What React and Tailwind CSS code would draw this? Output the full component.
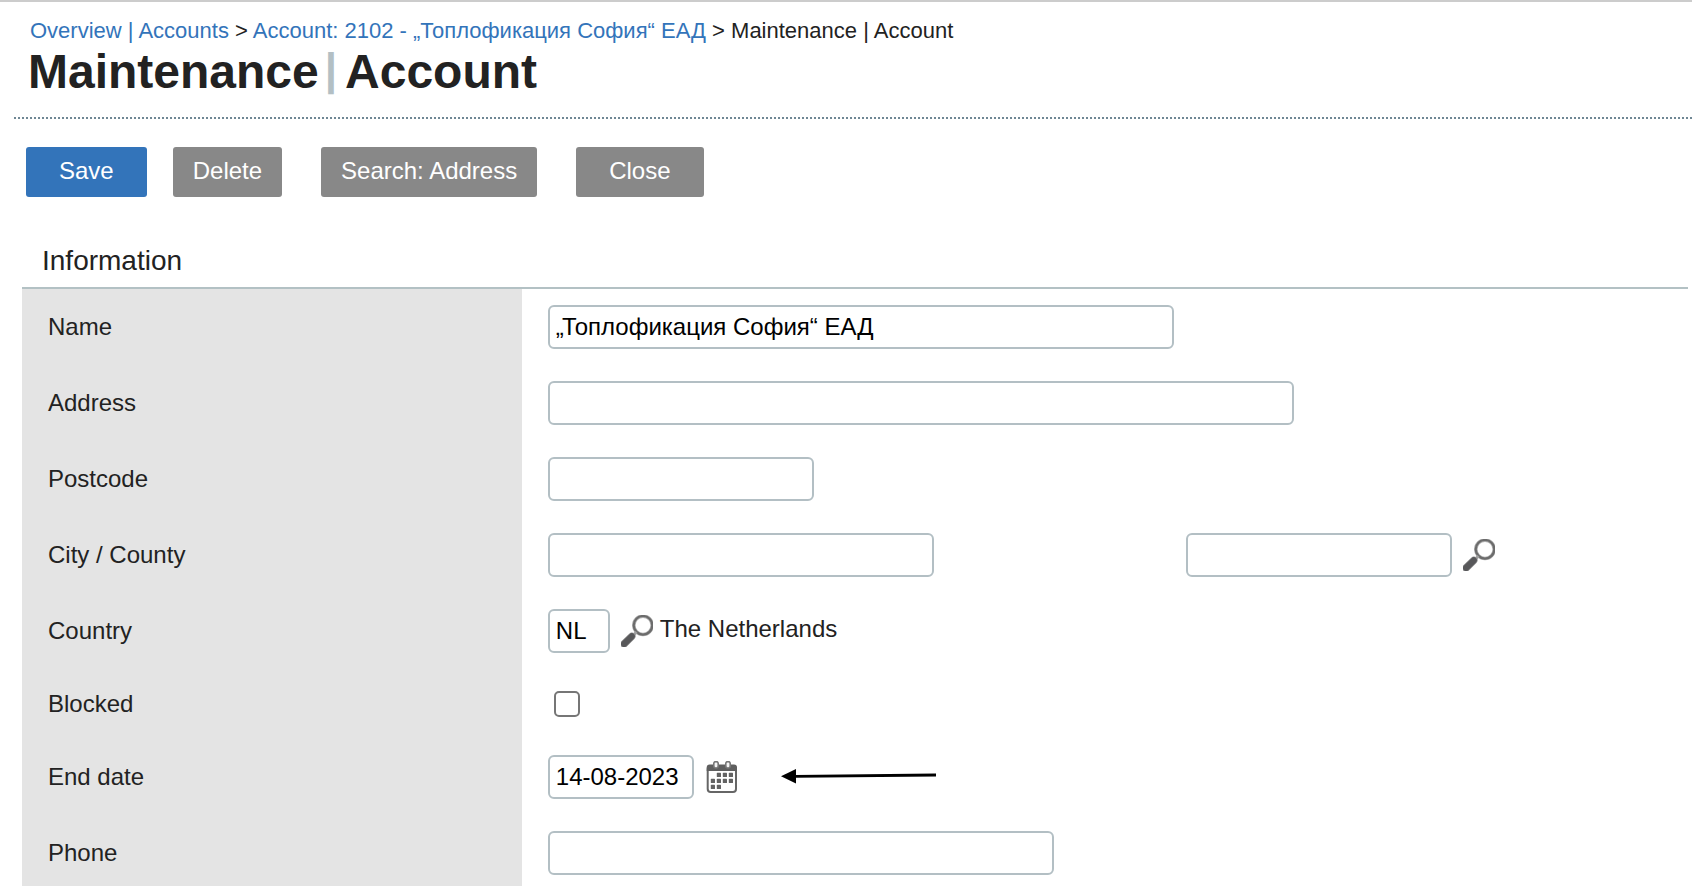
import React, { useState } from "react";

const fieldClass =
  "h-11 rounded-md border-2 border-[#b3bfc4] bg-white px-1.5 text-2xl text-black outline-none focus:border-[#3374ba]";

const SearchIcon = () => (
  <svg viewBox="0 0 32 32" className="h-8 w-8" fill="none">
    <circle cx="22" cy="10.3" r="9.2" stroke="#b0b0b0" strokeWidth="3.6" />
    <circle cx="22" cy="10.3" r="9.3" stroke="#6c6c6c" strokeWidth="2.2" />
    <path d="M12 20.5 L15.5 17" stroke="#a0a0a0" strokeWidth="3" />
    <path d="M3 29 L10.8 21.3" stroke="#8a8a8b" strokeWidth="7.4" strokeLinecap="round" />
    <path d="M3 29 L10.8 21.3" stroke="#58585a" strokeWidth="6" strokeLinecap="round" />
  </svg>
);

const dots = [
  [14, 14], [20, 14], [26, 14],
  [8, 20], [14, 20], [20, 20], [26, 20],
  [8, 26], [14, 26],
];

const CalendarIcon = () => (
  <svg viewBox="0 0 32 32" className="h-8 w-8" fill="none">
    <rect x="2.7" y="5" width="28.3" height="26" rx="3" fill="#fff" stroke="#666" strokeWidth="2" />
    <path d="M1.7 10 V6.5 a3 3 0 0 1 3-3 H29 a3 3 0 0 1 3 3 V10 Z" fill="#5f5f5f" />
    <rect x="8.8" y="0.6" width="4.4" height="6.4" rx="2" fill="#f4f4f4" stroke="#777" strokeWidth="1.6" />
    <rect x="20.8" y="0.6" width="4.4" height="6.4" rx="2" fill="#f4f4f4" stroke="#777" strokeWidth="1.6" />
    {dots.map(([x, y]) => (
      <rect key={`${x}-${y}`} x={x - 2.2} y={y - 2.2} width="4.2" height="4.2" rx="0.6" fill="#636363" />
    ))}
  </svg>
);

const ArrowLeft = () => (
  <svg viewBox="0 0 156 16" className="h-4 w-[156px]" aria-hidden="true">
    <path d="M14 7.4 L155 6" stroke="#000" strokeWidth="2.8" />
    <path d="M0 7.2 L15 0 V14.6 Z" fill="#000" />
  </svg>
);

const IconButton = ({ label, children }) => (
  <button type="button" aria-label={label} className="cursor-pointer">
    {children}
  </button>
);

const Row = ({ label, htmlFor, height = "h-[76px]", children }) => (
  <div className={`flex ${height}`}>
    <div className="flex w-[30%] shrink-0 items-center bg-[#e4e4e4] pl-[26px]">
      <label htmlFor={htmlFor}>{label}</label>
    </div>
    <div className="flex flex-1 items-center pl-[26px]">{children}</div>
  </div>
);

const App = () => {
  const [form, setForm] = useState({
    name: "„Топлофикация София“ ЕАД",
    address: "",
    postcode: "",
    city: "",
    county: "",
    country: "NL",
    endDate: "14-08-2023",
    phone: "",
  });
  const [blocked, setBlocked] = useState(false);

  const bind = (key) => ({
    id: key,
    type: "text",
    value: form[key],
    onChange: (e) => setForm({ ...form, [key]: e.target.value }),
  });

  return (
    <div className="h-screen overflow-hidden border-t-2 border-[#cccccc] bg-white font-['Liberation_Sans',Arial,sans-serif] text-2xl text-[#222222]">
      {/* Header */}
      <header className="ml-3.5 border-b-2 border-dotted border-[#6f8794] pt-[17px] pb-[21px]">
        <nav className="pl-4 text-[22px] leading-6">
          <a href="#accounts" className="text-[#3374ba]">Overview | Accounts</a>
          {" > "}
          <a href="#account" className="text-[#3374ba]">Account: 2102 - „Топлофикация София“ ЕАД</a>
          {" > "}
          <span>Maintenance | Account</span>
        </nav>
        <h1 className="mt-[5px] flex pl-3.5 text-5xl leading-12 font-bold">
          <span>Maintenance</span>
          <span className="mr-2 ml-1.5 text-[44px] leading-[42px] text-[#b3bfc4]">|</span>
          <span>Account</span>
        </h1>
      </header>

      {/* Actions */}
      <div className="mt-7 flex pl-[26px] text-white">
        <button type="button" className="h-[50px] rounded-[3px] bg-[#3374ba] px-[33px] pb-0.5">Save</button>
        <button type="button" className="ml-[26px] h-[50px] rounded-[3px] bg-[#888888] px-5 pb-0.5">Delete</button>
        <button type="button" className="ml-[39px] h-[50px] rounded-[3px] bg-[#888888] px-5 pb-0.5">Search: Address</button>
        <button type="button" className="ml-[39px] h-[50px] rounded-[3px] bg-[#888888] px-[33px] pb-0.5">Close</button>
      </div>

      {/* Information */}
      <section className="mt-12 mr-1 ml-[22px]">
        <h2 className="border-b-2 border-[#b3c1c4] pb-2.5 pl-5 text-[28px] leading-8">Information</h2>
        <Row label="Name" htmlFor="name">
          <input {...bind("name")} className={`${fieldClass} w-[626px]`} />
        </Row>
        <Row label="Address" htmlFor="address">
          <input {...bind("address")} className={`${fieldClass} w-[746px]`} />
        </Row>
        <Row label="Postcode" htmlFor="postcode">
          <input {...bind("postcode")} className={`${fieldClass} w-[266px]`} />
        </Row>
        <Row label="City / County" htmlFor="city">
          <div className="w-[56%]">
            <input {...bind("city")} className={`${fieldClass} block w-[386px]`} />
          </div>
          <div className="flex items-center gap-[11px]">
            <input {...bind("county")} aria-label="County" className={`${fieldClass} w-[266px]`} />
            <IconButton label="Search county"><SearchIcon /></IconButton>
          </div>
        </Row>
        <Row label="Country" htmlFor="country">
          <div className="flex items-center gap-[11px]">
            <input {...bind("country")} className={`${fieldClass} w-[62px]`} />
            <IconButton label="Search country"><SearchIcon /></IconButton>
          </div>
          <span className="pb-1 pl-[7px]">The Netherlands</span>
        </Row>
        <Row label="Blocked" htmlFor="blocked" height="h-[70px]">
          <input
            id="blocked"
            type="checkbox"
            checked={blocked}
            onChange={(e) => setBlocked(e.target.checked)}
            className="ml-1.5 size-[26px] appearance-none rounded-[5px] border-2 border-[#767676] bg-white checked:bg-[#3374ba]"
          />
        </Row>
        <Row label="End date" htmlFor="endDate">
          <div className="flex items-center gap-[11px]">
            <input {...bind("endDate")} className={`${fieldClass} w-[146px]`} />
            <IconButton label="Pick a date"><CalendarIcon /></IconButton>
          </div>
          <span className="ml-11"><ArrowLeft /></span>
        </Row>
        <Row label="Phone" htmlFor="phone">
          <input {...bind("phone")} className={`${fieldClass} w-[506px]`} />
        </Row>
      </section>
    </div>
  );
};

export default App;
